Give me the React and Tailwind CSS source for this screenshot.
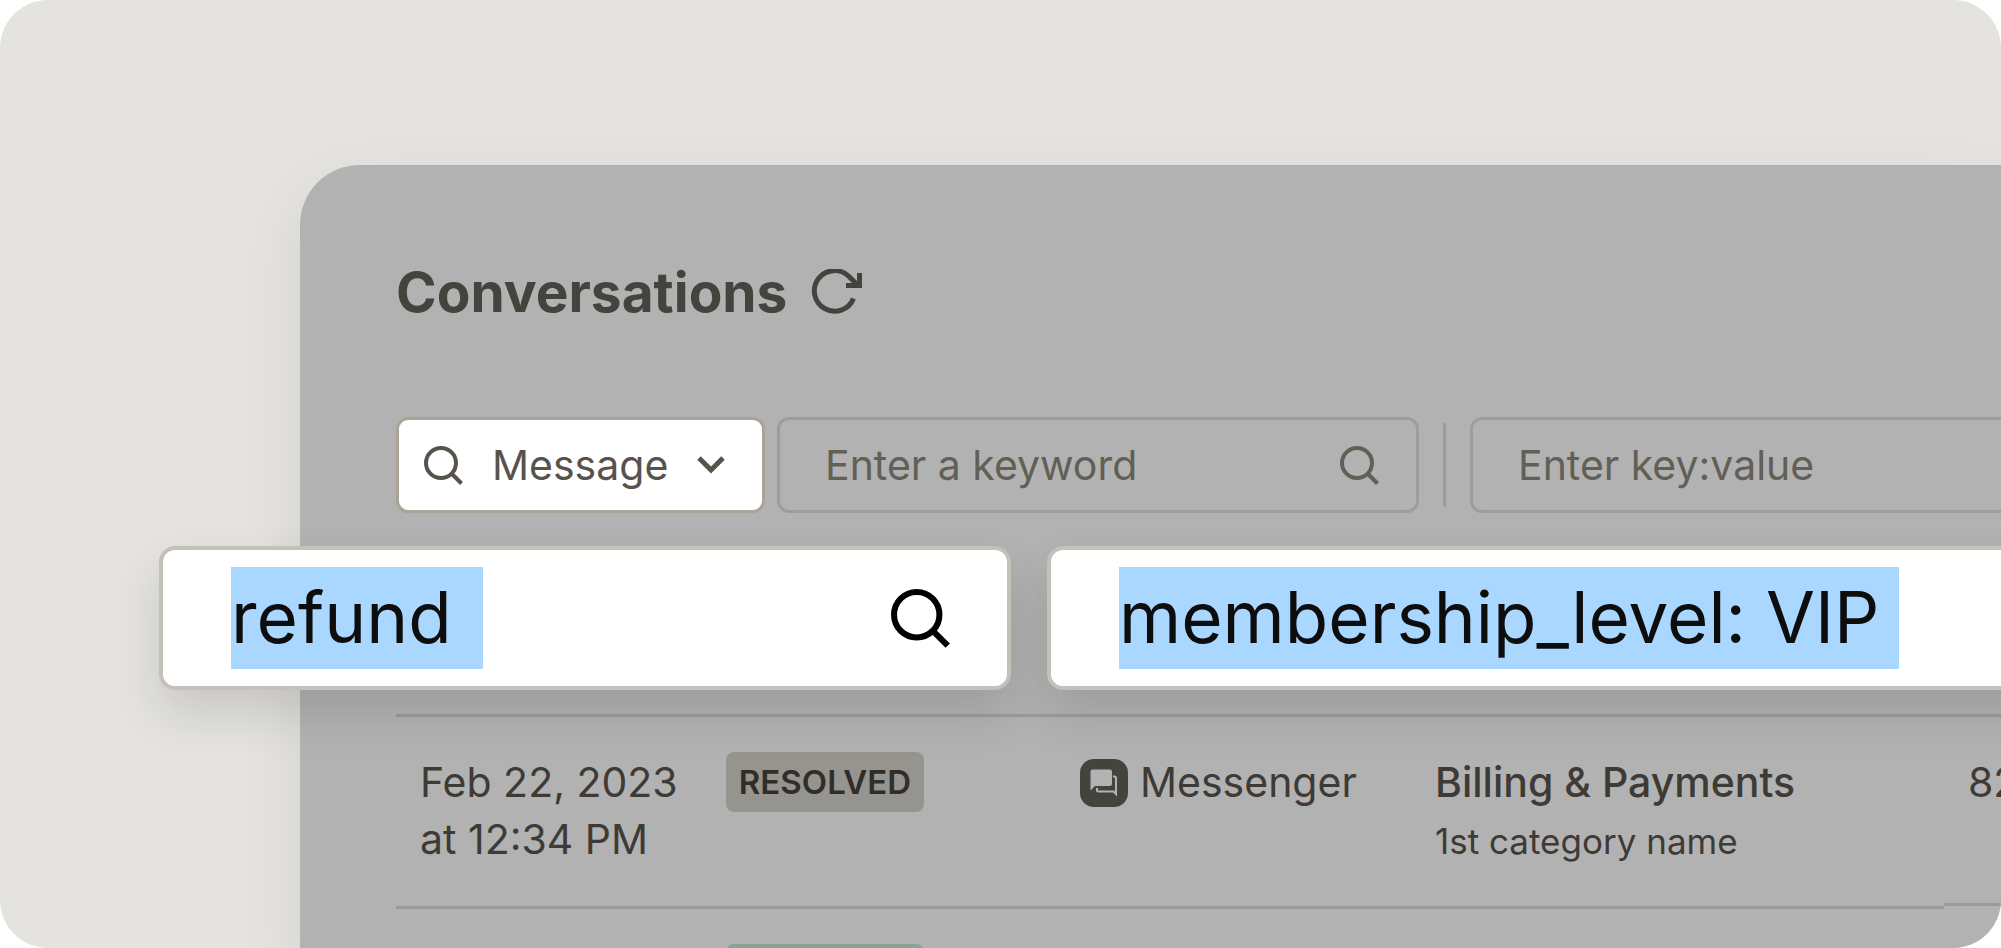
const rows = [
  {
    date: ["Feb 22, 2023", "at 12:34 PM"],
    status: "RESOLVED",
    channel: "Messenger",
    category: "Billing & Payments",
    subcategory: "1st category name",
    count: "82",
  },
];

function SearchIcon({ className }) {
  return (
    <svg className={className} viewBox="0 0 39 39" fill="none" stroke="currentColor" strokeWidth="4" aria-hidden="true">
      <circle cx="17" cy="17" r="15" />
      <path d="M27.5 27.5 37.5 37.5" />
    </svg>
  );
}

function RefreshIcon() {
  return (
    <svg className="h-[46px] w-[52px]" viewBox="0 0 52 46" fill="none" stroke="currentColor" strokeWidth="5" aria-hidden="true">
      <path d="M42.5 29.5A20.300 20.300 0 1 1 38 7.5L47 16.5" />
      <path d="M48.5 4V16.5H35" />
    </svg>
  );
}

function ChevronIcon() {
  return (
    <svg className="h-5 w-7 shrink-0" viewBox="0 0 28 20" fill="none" stroke="currentColor" strokeWidth="5" aria-hidden="true">
      <path d="M2 3 14 15 26 3" />
    </svg>
  );
}

function MessengerIcon() {
  return (
    <svg className="size-12 shrink-0" viewBox="0 0 48 48" aria-hidden="true">
      <rect width="48" height="48" rx="14" fill="#45433e" />
      <path d="M12.5 10.5H30a2 2 0 0 1 2 2V25a2 2 0 0 1-2 2H15L10.5 31.5V12.5a2 2 0 0 1 2-2Z" fill="#b2b2b2" />
      <path d="M33 17.5h1.500a1.500 1.500 0 0 1 1.500 1.500V35L33.5 32.5H18.5a1.500 1.500 0 0 1-1.500-1.500V29" fill="none" stroke="#b2b2b2" strokeWidth="2" />
    </svg>
  );
}

function Filters() {
  return (
    <div className="mt-[94px] flex h-24 w-[1900px] text-[41px]">
      <div className="relative flex w-[369px] shrink-0 items-center rounded-xl border-3 border-[#aaa398] bg-white text-[#57534c]">
        <SearchIcon className="pointer-events-none absolute left-[25px] size-[39px]" />
        <select aria-label="Search in" className="h-full w-full appearance-none bg-transparent pt-0.5 pl-[93px] outline-none">
          <option>Message</option>
        </select>
        <div className="pointer-events-none absolute right-[37px]">
          <ChevronIcon />
        </div>
      </div>
      <label className="ml-3 flex w-[642px] shrink-0 items-center rounded-xl border-3 border-[#9e9e98] pr-[37px] pl-[45px] text-[#625f57]">
        <input aria-label="Keyword" placeholder="Enter a keyword" className="min-w-0 flex-1 bg-transparent pt-0.5 outline-none placeholder:text-[#625f57]" />
        <SearchIcon className="size-[39px] shrink-0" />
      </label>
      <div className="mx-6 my-1.5 w-[3px] shrink-0 bg-[#9e9e98]" />
      <label className="flex flex-1 items-center rounded-xl border-3 border-[#9e9e98] px-[45px]">
        <input aria-label="Key and value" placeholder="Enter key:value" className="min-w-0 flex-1 bg-transparent pt-0.5 outline-none placeholder:text-[#625f57]" />
      </label>
    </div>
  );
}

function ConversationTable() {
  return (
    <table className="mt-[201px] w-[1900px] table-fixed border-t-3 border-[#9b9b9b] text-[41px] leading-[57px] text-[#3e3a35]">
      <colgroup>
        <col className="w-[306px]" />
        <col className="w-[354px]" />
        <col className="w-[355px]" />
        <col className="w-[533px]" />
        <col />
      </colgroup>
      <tbody className="align-top">
        {rows.map((row) => (
          <tr key={row.category}>
            <td className="p-0">
              <div className="h-48 border-b-3 border-[#9b9b9b] pt-[37px] pl-6">
                {row.date[0]}
                <br />
                {row.date[1]}
              </div>
            </td>
            <td className="p-0">
              <div className="h-48 border-b-3 border-[#9b9b9b] pt-[35px] pl-6">
                <span className="flex h-[60px] w-[198px] items-center justify-center rounded-lg bg-[#96948e] text-[33px] font-semibold text-[#312e2a]">
                  {row.status}
                </span>
              </div>
            </td>
            <td className="p-0">
              <div className="flex h-48 items-start border-b-3 border-[#9b9b9b] pt-[37px] pl-6">
                <div className="flex items-center gap-3">
                  <MessengerIcon />
                  {row.channel}
                </div>
              </div>
            </td>
            <td className="p-0">
              <div className="h-48 border-b-3 border-[#9b9b9b] pt-[37px] pl-6">
                <div className="font-medium">{row.category}</div>
                <div className="text-[35px] leading-[60px]">{row.subcategory}</div>
              </div>
            </td>
            <td className="p-0">
              <div className="h-[189px] border-b-3 border-[#9b9b9b] pt-[37px] pl-6">{row.count}</div>
            </td>
          </tr>
        ))}
        <tr>
          <td />
          <td className="p-0">
            <div className="pt-[35px] pl-6">
              <div className="h-[60px] w-[198px] rounded-lg bg-[#8ba394]" />
            </div>
          </td>
        </tr>
      </tbody>
    </table>
  );
}

function SearchOverlay() {
  return (
    <div className="absolute top-[546px] -right-12 left-[159px] flex h-36 gap-9 text-[71px] text-[#0d0d0d]">
      <label className="flex w-[852px] shrink-0 items-center justify-between rounded-2xl border-4 border-[#c5c0b9] bg-white pr-[57px] pl-[68px] shadow-[0_24px_48px_rgba(0,0,0,0.12)]">
        <input aria-label="Keyword value" defaultValue="refund" className="h-[102px] w-[252px] bg-[#aad7ff] pb-0.5 outline-none" />
        <SearchIcon className="size-[59px] shrink-0 text-black" />
      </label>
      <label className="flex flex-1 items-center rounded-2xl border-4 border-[#c5c0b9] bg-white pl-[68px] shadow-[0_24px_48px_rgba(0,0,0,0.12)]">
        <input aria-label="Key and value entry" defaultValue="membership_level: VIP" className="h-[102px] w-[780px] bg-[#aad7ff] pb-0.5 outline-none" />
      </label>
    </div>
  );
}

export default function App() {
  return (
    <main className="relative flex h-screen flex-col overflow-hidden rounded-[48px] bg-[#e4e3df] font-['Inter',sans-serif]">
      <section className="mt-[165px] ml-[300px] flex-1 overflow-hidden rounded-tl-[60px] bg-[#b2b2b2] pt-24 pl-24 shadow-[0_24px_64px_rgba(0,0,0,0.08)]">
        <header className="flex h-[62px] items-center gap-6 text-[#45433e]">
          <h1 className="text-[55px] leading-[62px] font-bold">Conversations</h1>
          <button aria-label="Refresh">
            <RefreshIcon />
          </button>
        </header>
        <Filters />
        <ConversationTable />
      </section>
      <SearchOverlay />
    </main>
  );
}
